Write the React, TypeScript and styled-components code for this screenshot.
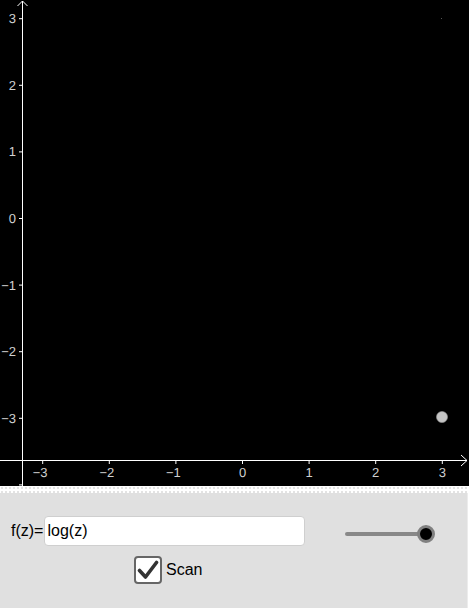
import React from 'react';
import styled, { createGlobalStyle } from 'styled-components';

const GlobalStyle = createGlobalStyle`
    body {
        margin: 0;
        background: #ffffff;
        font-family: 'Liberation Sans', Arial, sans-serif;
    }
`;

const Page = styled.div`
    width: 471px;
    height: 608px;
    display: flex;
    flex-direction: column;
    overflow: hidden;
`;

const GraphView = styled.div`
    width: 469px;
    height: 486px;
    background: #000000;
`;

const Divider = styled.div`
    width: 469px;
    height: 7px;
    background-color: #ffffff;
    background-image: radial-gradient(#e2e2e2 0.7px, transparent 0.9px);
    background-size: 4px 4px;
`;

const Panel = styled.div`
    width: 467px;
    flex: 1;
    background: #e0e0e0;
    border-right: 1px solid #ececec;
    display: flex;
    flex-direction: column;
    padding-top: 23px;
`;

const TopRow = styled.div`
    display: flex;
    align-items: center;
    height: 30px;
`;

const Label = styled.span`
    margin-left: 11px;
    font-size: 16px;
    color: #000;
`;

const Input = styled.div`
    margin-left: 1px;
    width: 257px;
    height: 28px;
    background: #ffffff;
    border: 1px solid #cfcfcf;
    border-radius: 4px;
    display: flex;
    align-items: center;
    padding-left: 2px;
    font-size: 16px;
    color: #000;
`;

const Slider = styled.div`
    margin-left: 40px;
    margin-top: 6px;
    width: 82px;
    height: 4px;
    border-radius: 2px;
    background: #888888;
    position: relative;
`;

const Knob = styled.div`
    position: absolute;
    right: -8px;
    top: -7px;
    width: 12px;
    height: 12px;
    border-radius: 50%;
    background: #000;
    border: 3px solid #808080;
`;

const CheckRow = styled.div`
    display: flex;
    align-items: center;
    margin-top: 10px;
    margin-left: 134px;
`;

const CheckBox = styled.div`
    width: 24px;
    height: 24px;
    border: 2px solid #666666;
    border-radius: 4px;
    background: #ffffff;
    display: flex;
    align-items: center;
    justify-content: center;
`;

const CheckText = styled.span`
    margin-left: 4px;
    font-size: 16px;
    color: #000;
`;

const ox = 242;
const oy = 218;
const unit = 66.6;
const axisX = 22;
const axisY = 460;

const Graph = () => {
    const xs = [-3, -2, -1, 0, 1, 2, 3];
    const ys = [3, 2, 1, 0, -1, -2, -3];
    const fmt = (n: number) => (n < 0 ? '\u2212' + Math.abs(n) : String(n));
    return (
        <svg width="469" height="486" viewBox="0 0 469 486">
            <g stroke="#ffffff" strokeWidth="1" fill="none">
                <line x1={axisX + 0.5} y1={1} x2={axisX + 0.5} y2={486} />
                <line x1={0} y1={axisY + 0.5} x2={467} y2={axisY + 0.5} />
                <polyline points={`${axisX - 4.5},6 ${axisX + 0.5},1 ${axisX + 5.5},6`} />
                <polyline points={`461,${axisY - 5} 467,${axisY + 0.5} 461,${axisY + 6}`} />
                {xs.map((x) => (
                    <line
                        key={x}
                        x1={ox + x * unit + 0.5}
                        y1={axisY + 1}
                        x2={ox + x * unit + 0.5}
                        y2={axisY + 4}
                    />
                ))}
                {[...ys, -4].map((y) => (
                    <line
                        key={y}
                        x1={axisX - 3}
                        y1={oy - y * unit + 0.5}
                        x2={axisX}
                        y2={oy - y * unit + 0.5}
                    />
                ))}
            </g>
            <g
                fill="#d0d0d0"
                fontFamily="'Liberation Sans', Arial, sans-serif"
                fontSize="13"
                style={{ textRendering: 'geometricPrecision' }}
            >
                {xs.map((x) => (
                    <text key={x} x={ox + x * unit + (x < 0 ? -2 : 0.5)} y={476.5} textAnchor="middle">
                        {fmt(x)}
                    </text>
                ))}
                {ys.map((y) => (
                    <text key={y} x={16} y={oy - y * unit + 5} textAnchor="end">
                        {fmt(y)}
                    </text>
                ))}
            </g>
            <rect x={441} y={18} width={1} height={1} fill="#555" />
            <circle cx={442} cy={417} r={5.5} fill="#c4c4c4" stroke="#9a9a9a" strokeWidth="0.6" />
        </svg>
    );
};

export default function App() {
    return (
        <Page>
            <GlobalStyle />
            <GraphView>
                <Graph />
            </GraphView>
            <Divider />
            <Panel>
                <TopRow>
                    <Label>f(z)=</Label>
                    <Input>log(z)</Input>
                    <Slider>
                        <Knob />
                    </Slider>
                </TopRow>
                <CheckRow>
                    <CheckBox>
                        <svg width="22" height="20" viewBox="0 0 22 20">
                            <path
                                d="M2.5 10.5 L8.5 17 L19.5 2.5"
                                fill="none"
                                stroke="#333"
                                strokeWidth="3.6"
                                strokeLinecap="round"
                                strokeLinejoin="round"
                            />
                        </svg>
                    </CheckBox>
                    <CheckText>Scan</CheckText>
                </CheckRow>
            </Panel>
        </Page>
    );
}
